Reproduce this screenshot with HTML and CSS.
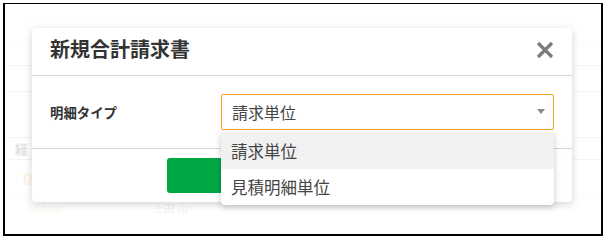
FILE: index.html
```html
<!DOCTYPE html>
<html lang="ja">
<head>
<meta charset="utf-8">
<title>新規合計請求書</title>
<link rel="stylesheet" href="styles.css">
</head>
<body>
<div class="frame">
  <div class="page">
    <div class="row r1"></div>
    <div class="row r2"></div>
    <div class="row r3"></div>
    <div class="row r4"></div>
    <div class="row r5"><span class="ghost-text">経</span></div>
    <div class="row r6"><span class="ghost-num">0</span></div>
    <div class="row r7"><span class="ghost-num small">00000</span><span class="ghost-text small">上田 山</span></div>
  </div>
  <div class="modal">
    <div class="modal-header">
      <h2 class="modal-title">新規合計請求書</h2>
      <span class="close">
        <svg width="18" height="18" viewBox="0 0 18 18"><path d="M2 2 L16 16 M16 2 L2 16" stroke="#7a7a7a" stroke-width="3.2" stroke-linecap="butt"/></svg>
      </span>
    </div>
    <div class="modal-body">
      <label class="field-label">明細タイプ</label>
      <div class="select">
        <span class="select-value">請求単位</span>
        <span class="arrow"></span>
      </div>
    </div>
    <div class="modal-footer">
      <button class="btn-primary" aria-label="登録"></button>
    </div>
    <ul class="dropdown">
      <li class="option active">請求単位</li>
      <li class="option">見積明細単位</li>
    </ul>
  </div>
</div>
</body>
</html>
```
FILE: styles.css
```css
* { box-sizing: border-box; }
html, body { margin: 0; padding: 0; background: #fff; }
body {
  font-family: "Noto Sans CJK JP", "Noto Sans", sans-serif;
  color: #333;
}
.frame {
  position: relative;
  margin: 3px 0 0 3px;
  width: 600px;
  height: 233px;
  border: 2px solid #000;
  border-width: 1.5px 2px 2px 2px;
  overflow: hidden;
  background: #fff;
}
.page { padding: 0; }
.row {
  border-bottom: 1px solid #f5f5f5;
  display: flex;
  align-items: center;
  padding-left: 10px;
}
.r1 { height: 41px; border-bottom-color: #fafafa; }
.r2 { height: 21px; }
.r3 { height: 26px; }
.r4 { height: 46px; }
.r5 { height: 22px; }
.r6 { height: 37px; border-bottom-color: #fbfbfb; }
.r7 { height: 22px; border-bottom: none; gap: 90px; }
.ghost-text { color: #e2e2e2; font-size: 13px; font-weight: bold; }
.ghost-num { color: #fdf0dc; font-size: 16px; padding-left: 8px; }
.ghost-num.small { font-size: 11px; letter-spacing: 1px; padding-left: 12px; color: #fef6ea; }
.ghost-text.small { font-size: 11px; font-weight: normal; color: #f2f2f2; }

.modal {
  position: absolute;
  left: 27px;
  top: 23.5px;
  width: 540px;
  height: 174px;
  background: #fff;
  border-radius: 4px;
  box-shadow: 0 2px 8px rgba(0,0,0,0.18);
}
.modal-header {
  height: 48px;
  display: flex;
  align-items: center;
  justify-content: space-between;
  padding: 0 18px;
  border-bottom: 1px solid #d4d4d4;
}
.modal-title {
  margin: 0;
  font-size: 20px;
  font-weight: bold;
  color: #333;
  line-height: 1;
  position: relative;
  top: -2px;
}
.close { display: flex; width: 18px; height: 18px; position: relative; top: -1px; }
.modal-body {
  display: flex;
  align-items: center;
  padding: 18px 18px 18px 18px;
  border-bottom: 1px solid #d4d4d4;
}
.field-label {
  width: 171px;
  font-size: 13.4px;
  font-weight: bold;
  color: #333;
  flex: none;
}
.select {
  flex: 1;
  height: 36px;
  border: 1px solid #f5a21c;
  border-radius: 2px;
  display: flex;
  align-items: center;
  justify-content: space-between;
  padding: 0 8px 0 10px;
}
.select-value { font-size: 16px; color: #444; }
.arrow {
  width: 0; height: 0;
  border-left: 4px solid transparent;
  border-right: 4px solid transparent;
  border-top: 5px solid #888;
}
.modal-footer {
  padding: 9px 0 0 135px;
}
.btn-primary {
  display: block;
  width: 270px;
  height: 35px;
  border: none;
  border-radius: 3px;
  background: #00a844;
}
.dropdown {
  position: absolute;
  left: 189px;
  top: 105px;
  width: 333px;
  margin: 0;
  padding: 0;
  list-style: none;
  background: #fff;
  border-radius: 0 0 4px 4px;
  box-shadow: 0 2px 6px rgba(0,0,0,0.22);
  overflow: hidden;
}
.option {
  height: 36px;
  display: flex;
  align-items: center;
  padding-left: 10px;
  font-size: 16.5px;
  color: #444;
}
.option.active { background: #f1f1f1; }
```
